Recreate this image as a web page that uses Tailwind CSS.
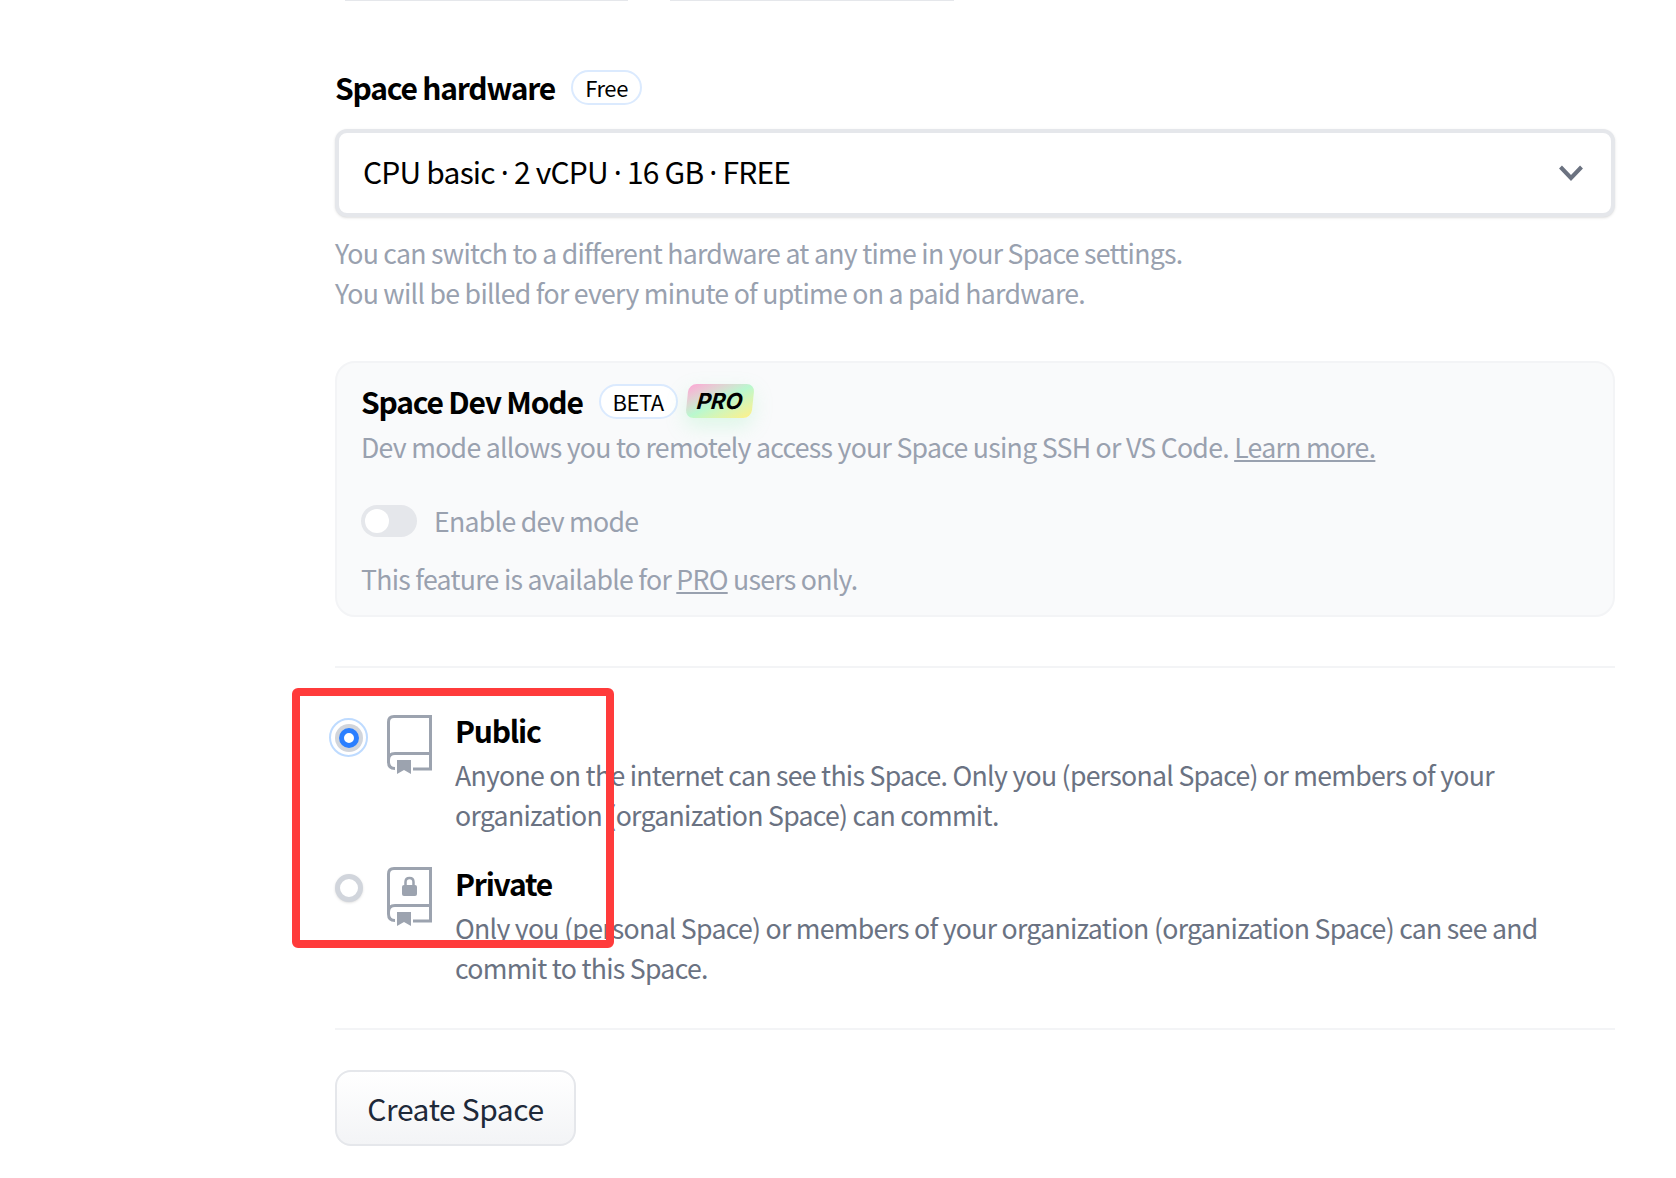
<!doctype html>
<html lang="en">
<head>
<meta charset="utf-8">
<title>Create Space</title>
<script src="https://cdn.jsdelivr.net/npm/@tailwindcss/browser@4"></script>
</head>
<body class="bg-white">
<div class="relative w-[1676px] h-[1178px] overflow-hidden bg-white pl-[335px] pr-[61px] font-['Noto_Sans_CJK_JP','Source_Sans_3','Noto_Sans',sans-serif] text-[26.67px] leading-[40px] tracking-[-0.72px]">
  <div class="flex h-px">
    <div class="ml-[10px] w-[283px] bg-gray-200"></div>
    <div class="ml-[42px] w-[284px] bg-gray-200"></div>
  </div>

  <div class="mt-[63px] flex h-[46px] items-center">
    <h2 class="text-[30px] font-semibold tracking-[-1.2px] text-black">Space hardware</h2>
    <span class="ml-[16px] flex h-[35px] w-[71px] items-center justify-center rounded-full border-2 border-blue-100 bg-white text-[22px] tracking-[-0.4px] text-black">Free</span>
  </div>

  <div class="mt-[19px] flex h-[88px] items-center justify-between rounded-[12px] border-4 border-gray-200 bg-white pl-[24px] pr-[28px] shadow-sm">
    <span class="-mt-[2px] text-[30px] tracking-[-0.8px] text-black">CPU basic <span class="font-['Noto_Sans']">·</span> 2 vCPU <span class="font-['Noto_Sans']">·</span> 16 GB <span class="font-['Noto_Sans']">·</span> FREE</span>
    <svg width="24" height="16" viewBox="0 0 24 16" fill="none" stroke="#6b7280" stroke-width="4"><path d="M1.5 2 L12 13 L22.5 2"/></svg>
  </div>

  <p class="mt-[16px] text-gray-400">You can switch to a different hardware at any time in your Space settings.<br>You will be billed for every minute of uptime on a paid hardware.</p>

  <section class="mt-[48px] h-[256px] rounded-[20px] border-2 border-gray-100 bg-gray-50 px-[24px] pt-[15px]">
    <div class="flex h-[46px] items-center">
      <h3 class="text-[30px] font-semibold tracking-[-1.2px] text-black">Space Dev Mode</h3>
      <span class="ml-[16px] flex h-[35px] w-[79px] items-center justify-center rounded-full border-2 border-blue-100 bg-white text-[22px] tracking-[-0.4px] text-black">BETA</span>
      <span class="relative ml-[9px] flex h-[34px] w-[66px] -skew-x-6 items-center justify-center rounded-[8px] bg-gradient-to-br from-pink-300 via-green-200 to-yellow-200 text-[22px] font-bold italic tracking-normal text-black font-['Inter',sans-serif] shadow-[0_8px_20px_rgba(134,239,172,0.25)]">PRO</span>
    </div>
    <p class="mt-[3px] text-gray-400">Dev mode allows you to remotely access your Space using SSH or VS Code. <a class="underline" href="#">Learn more.</a></p>
    <div class="mt-[38px] flex h-[32px] items-center">
      <span class="flex h-[32px] w-[56px] items-center rounded-full bg-gray-200 pl-[4px]"><span class="h-[24px] w-[24px] rounded-full bg-white"></span></span>
      <span class="ml-[17px] text-gray-400">Enable dev mode</span>
    </div>
    <p class="mt-[22px] text-gray-400">This feature is available for <a class="underline" href="#">PRO</a> users only.</p>
  </section>

  <hr class="mt-[49px] border-t-2 border-gray-100">

  <div class="mt-[47px] flex h-[157px]">
    <div class="ml-[-6px] flex h-[44px] w-[39px] items-start justify-center">
      <span class="mt-[3px] flex h-[39px] w-[39px] items-center justify-center rounded-full border-2 border-blue-200 bg-white">
        <span class="flex h-[28px] w-[28px] items-center justify-center rounded-full bg-gray-300"><span class="h-[20px] w-[20px] rounded-full border-[5px] border-blue-500 bg-white"></span></span>
      </span>
    </div>
    <svg class="ml-[19px] mt-0 shrink-0" width="45" height="60" viewBox="0 0 45 60" fill="none" stroke="#9ca3af" stroke-width="3"><path d="M43.5 38V1.5H7Q1.5 1.5 1.5 7V47Q1.5 53.5 8 53.5"/><path d="M1.5 45Q1.5 38.5 8 38.5H43.5V54H26"/><path fill="#9ca3af" stroke="none" d="M10 45H24V59L17 55L10 59Z"/></svg>
    <div class="ml-[23px]">
      <h4 class="mt-[-8px] h-[48px] text-[30px] font-semibold leading-[46px] tracking-[-1.2px] text-black">Public</h4>
      <p class="text-gray-500">Anyone on the internet can see this Space. Only you (personal Space) or members of your<br>organization (organization Space) can commit.</p>
    </div>
  </div>
  <div class="flex h-[156px]">
    <div class="ml-[-6px] flex w-[39px] justify-center">
      <span class="mt-[2px] h-[28px] w-[28px] rounded-full border-[5px] border-gray-300 bg-white shadow-sm"></span>
    </div>
    <svg class="ml-[19px] mt-[-5px] shrink-0" width="45" height="60" viewBox="0 0 45 60" fill="none" stroke="#9ca3af" stroke-width="3"><path d="M43.5 38V1.5H7Q1.5 1.5 1.5 7V47Q1.5 53.5 8 53.5"/><path d="M1.5 45Q1.5 38.5 8 38.5H43.5V54H26"/><path fill="#9ca3af" stroke="none" d="M10 45H24V59L17 55L10 59Z"/><path fill="#9ca3af" stroke="none" d="M15 20Q15 18 17 18H28Q30 18 30 20V27Q30 29 28 29H17Q15 29 15 27Z"/><path stroke-width="2.5" d="M18.5 18V15Q18.5 11 22.5 11Q26.5 11 26.5 15V18"/></svg>
    <div class="ml-[23px]">
      <h4 class="mt-[-12px] h-[48px] text-[30px] font-semibold leading-[46px] tracking-[-1.2px] text-black">Private</h4>
      <p class="text-gray-500">Only you (personal Space) or members of your organization (organization Space) can see and<br>commit to this Space.</p>
    </div>
  </div>

  <hr class="border-t-2 border-gray-100">

  <button class="mt-[40px] h-[76px] w-[241px] rounded-[16px] border-2 border-gray-200 bg-gradient-to-b from-white to-gray-100 text-[30px] tracking-[-0.4px] text-gray-800">Create Space</button>

  <div class="pointer-events-none absolute left-[292px] top-[688px] h-[260px] w-[322px] rounded-[6px] border-[8px] border-[#ff3b3b]"></div>
</div>
</body>
</html>
